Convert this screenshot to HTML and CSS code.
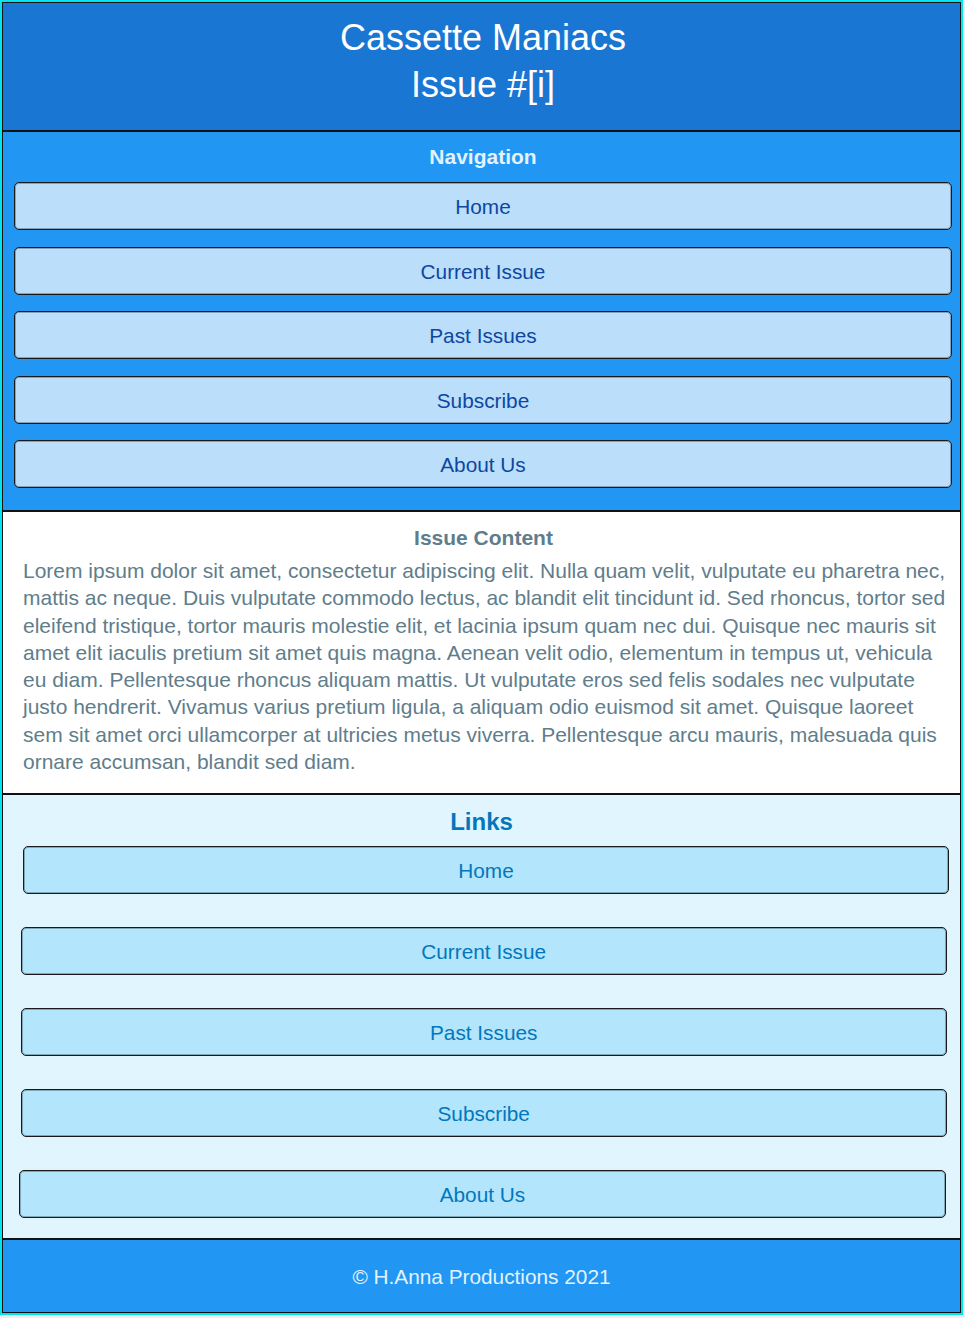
FILE: index.html
```html
<!DOCTYPE html>
<html lang="en">
<head>
<meta charset="utf-8">
<title>Cassette Maniacs</title>
<link rel="stylesheet" href="styles.css">
</head>
<body>
<div class="page">
  <header class="masthead">
    <h1 class="title">Cassette Maniacs<br>Issue #[i]</h1>
  </header>
  <nav class="nav">
    <h2 class="nav-title">Navigation</h2>
    <ul class="nav-list">
      <li><a class="nav-btn" href="#">Home</a></li>
      <li><a class="nav-btn" href="#">Current Issue</a></li>
      <li><a class="nav-btn" href="#">Past Issues</a></li>
      <li><a class="nav-btn" href="#">Subscribe</a></li>
      <li><a class="nav-btn" href="#">About Us</a></li>
    </ul>
  </nav>
  <main class="content">
    <h2 class="content-title">Issue Content</h2>
    <p class="content-text">Lorem ipsum dolor sit amet, consectetur adipiscing elit. Nulla quam velit, vulputate eu pharetra nec, mattis ac neque. Duis vulputate commodo lectus, ac blandit elit tincidunt id. Sed rhoncus, tortor sed eleifend tristique, tortor mauris molestie elit, et lacinia ipsum quam nec dui. Quisque nec mauris sit amet elit iaculis pretium sit amet quis magna. Aenean velit odio, elementum in tempus ut, vehicula eu diam. Pellentesque rhoncus aliquam mattis. Ut vulputate eros sed felis sodales nec vulputate justo hendrerit. Vivamus varius pretium ligula, a aliquam odio euismod sit amet. Quisque laoreet sem sit amet orci ullamcorper at ultricies metus viverra. Pellentesque arcu mauris, malesuada quis ornare accumsan, blandit sed diam.</p>
  </main>
  <aside class="links">
    <h2 class="links-title">Links</h2>
    <ul class="links-list">
      <li><a class="link-btn link-a" href="#">Home</a></li>
      <li><a class="link-btn link-b" href="#">Current Issue</a></li>
      <li><a class="link-btn link-b" href="#">Past Issues</a></li>
      <li><a class="link-btn link-b" href="#">Subscribe</a></li>
      <li><a class="link-btn link-c" href="#">About Us</a></li>
    </ul>
  </aside>
  <footer class="footer">© H.Anna Productions 2021</footer>
</div>
</body>
</html>
```

FILE: styles.css
```css
* {
  box-sizing: border-box;
}

html, body {
  margin: 0;
  padding: 0;
  background: #eeeeee;
  font-family: "Liberation Sans", Arial, sans-serif;
}

.page {
  width: 963px;
  border: 2px solid #00e5f0;
}

.masthead,
.nav,
.content,
.links,
.footer {
  border: 1px solid #111111;
}

.masthead {
  background: #1976d2;
  padding: 11px 0 22px 3px;
}

.title {
  margin: 0;
  font-size: 36px;
  line-height: 47px;
  font-weight: normal;
  color: #ffffff;
  text-align: center;
}

.nav {
  background: #2196f3;
  padding: 13px 8px 22px 11px;
}

.nav-title {
  margin: 0 0 13px;
  font-size: 21px;
  line-height: 24px;
  font-weight: bold;
  color: #e3f2fd;
  text-align: center;
}

.nav-list,
.links-list {
  list-style: none;
  margin: 0;
  padding: 0;
  display: flex;
  flex-direction: column;
}

.nav-list {
  gap: 16.5px;
}

.nav-btn,
.link-btn {
  display: flex;
  align-items: center;
  justify-content: center;
  height: 48px;
  padding-top: 2px;
  border: 1px solid #1a1a1a;
  border-radius: 5px;
  box-shadow: inset 0 0 0 1px rgba(38, 50, 56, 0.35);
  font-size: 20.8px;
  text-decoration: none;
}

.nav-btn {
  background: #bbdefb;
  color: #0d47a1;
}

.content {
  background: #ffffff;
  padding: 14px 12px 17.6px 16px;
  color: #607d8b;
}

.content-title {
  margin: 0 0 7px;
  font-size: 21px;
  line-height: 24px;
  font-weight: bold;
  text-align: center;
}

.content-text {
  margin: 0;
  padding-left: 4px;
  font-size: 21px;
  line-height: 27.3px;
}

.links {
  background: #e1f5fe;
  padding: 13px 0 20px;
}

.links-title {
  margin: 0 0 10px;
  font-size: 24px;
  line-height: 28px;
  font-weight: bold;
  color: #0277bd;
  text-align: center;
}

.links-list {
  gap: 33px;
}

.link-btn {
  background: #b3e5fc;
  color: #0277bd;
  width: 926px;
}

.link-a {
  margin-left: 20px;
}

.link-b {
  margin-left: 17.7px;
}

.link-c {
  margin-left: 15.7px;
  width: 927.5px;
}

.footer {
  background: #2196f3;
  color: #e3f2fd;
  height: 74px;
  padding-top: 2px;
  display: flex;
  align-items: center;
  justify-content: center;
  font-size: 20.8px;
}
```
